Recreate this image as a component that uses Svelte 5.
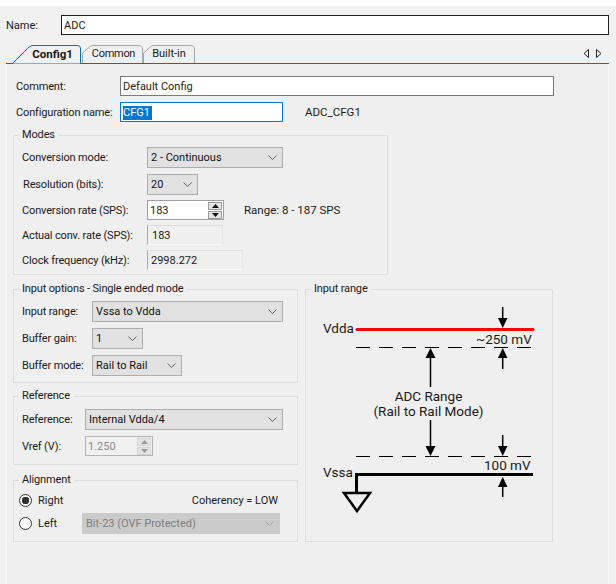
<script lang="ts">
  const dashes = [356, 379, 402, 425, 448, 471, 494, 517]
</script>

{#snippet combo(text, width, cls = '')}
  <div class="combo {cls}" style="width: {width}px">
    <span>{text}</span>
    <svg width="9" height="5" viewBox="0 0 9 5"><path d="M0.500 0.500l4 4 4-4" fill="none" stroke="currentColor" /></svg>
  </div>
{/snippet}

{#snippet spinButtons()}
  <div class="spin-btns">
    <div class="spin-btn"><svg width="7" height="4" viewBox="0 0 7 4"><path d="M3.5 0L7 4H0z" fill="currentColor" /></svg></div>
    <div class="spin-btn"><svg width="7" height="4" viewBox="0 0 7 4"><path d="M0 0h7L3.5 4z" fill="currentColor" /></svg></div>
  </div>
{/snippet}

<div class="window">
  <div class="name-row">
    <label class="name-label" for="name">Name:</label>
    <div class="name-input" id="name">ADC</div>
  </div>

  <div class="tab-strip">
    <div class="tab active">
      <svg class="tab-bg" width="69" height="19" viewBox="0 0 69 19">
        <path d="M0.5 18.5L15.5 3.5Q17.5 1.5 20 0.5H65Q68.500 0.5 68.500 3V19H0z" fill="#f0f0f0" stroke="#0e6db7" />
      </svg>
      <span>Config1</span>
    </div>
    <div class="tab common">
      <svg class="tab-bg" width="61" height="18" viewBox="0 0 61 18">
        <path d="M0.5 18V8L8 1.500Q9 0.500 11 0.500H57Q60.500 0.500 60.500 4V18" fill="#f0f0f0" stroke="#a8a8a8" />
      </svg>
      <span>Common</span>
    </div>
    <div class="tab builtin">
      <svg class="tab-bg" width="52" height="18" viewBox="0 0 52 18">
        <path d="M0.500 18V8L8 1.500Q9 0.500 11 0.500H48Q51.500 0.500 51.500 4V18" fill="#f0f0f0" stroke="#a8a8a8" />
      </svg>
      <span>Built-in</span>
    </div>
    <div class="tab-arrows">
      <svg width="19" height="9" viewBox="0 0 19 9">
        <path d="M5.500 0.500L1 4.500l4.500 4z" fill="none" stroke="#222" />
        <path d="M13.500 0.500L18 4.500l-4.500 4z" fill="none" stroke="#222" />
      </svg>
    </div>
  </div>

  <div class="page">
    <div class="row comment-row">
      <span class="lbl">Comment:</span>
      <div class="field comment">Default Config</div>
    </div>
    <div class="row config-row">
      <span class="lbl">Configuration name:</span>
      <div class="field config"><span class="selected">CFG1</span></div>
      <span class="macro">ADC_CFG1</span>
    </div>

    <fieldset class="modes">
      <legend>Modes</legend>
      <div class="stack modes-stack">
        <div class="row">
          <span class="lbl lbl-modes">Conversion mode:</span>
          {@render combo('2 - Continuous', 136)}
        </div>
        <div class="row resolution">
          <span class="lbl lbl-modes shift">Resolution (bits):</span>
          {@render combo('20', 51)}
        </div>
        <div class="row">
          <span class="lbl lbl-modes">Conversion rate (SPS):</span>
          <div class="spin rate">
            <span>183</span>
            {@render spinButtons()}
          </div>
          <span class="range-note">Range: 8 - 187 SPS</span>
        </div>
        <div class="row">
          <span class="lbl lbl-modes">Actual conv. rate (SPS):</span>
          <div class="readout actual">183</div>
        </div>
        <div class="row">
          <span class="lbl lbl-modes">Clock frequency (kHz):</span>
          <div class="readout clock">2998.272</div>
        </div>
      </div>
    </fieldset>

    <div class="lower">
      <div class="left-col">
        <fieldset class="input-options">
          <legend>Input options - Single ended mode</legend>
          <div class="stack opts-stack">
            <div class="row">
              <span class="lbl lbl-opts">Input range:</span>
              {@render combo('Vssa to Vdda', 191)}
            </div>
            <div class="row">
              <span class="lbl lbl-opts">Buffer gain:</span>
              {@render combo('1', 51)}
            </div>
            <div class="row">
              <span class="lbl lbl-opts">Buffer mode:</span>
              {@render combo('Rail to Rail', 90)}
            </div>
          </div>
        </fieldset>

        <fieldset class="reference">
          <legend>Reference</legend>
          <div class="stack ref-stack">
            <div class="row">
              <span class="lbl lbl-ref">Reference:</span>
              {@render combo('Internal Vdda/4', 198)}
            </div>
            <div class="row">
              <span class="lbl lbl-ref">Vref (V):</span>
              <div class="spin vref disabled">
                <span>1.250</span>
                {@render spinButtons()}
              </div>
            </div>
          </div>
        </fieldset>

        <fieldset class="alignment">
          <legend>Alignment</legend>
          <div class="row align-top">
            <span class="radio checked"></span>
            <span>Right</span>
            <span class="coherency">Coherency = LOW</span>
          </div>
          <div class="row align-bottom">
            <span class="radio"></span>
            <span class="left-lbl">Left</span>
            {@render combo('Bit-23 (OVF Protected)', 198, 'off')}
          </div>
        </fieldset>
      </div>

      <fieldset class="input-range">
        <legend>Input range</legend>
        <svg class="diagram" width="246" height="246" viewBox="306 296 246 246">
          <text x="323" y="333">Vdda</text>
          <line x1="357" y1="329.500" x2="533" y2="329.500" stroke="#f00" stroke-width="3" stroke-linecap="round" />
          {#each dashes as x}
            <line x1={x} x2={x + 14} y1="347.500" y2="347.500" stroke="#000" />
            <line x1={x} x2={x + 14} y1="456.500" y2="456.500" stroke="#000" />
          {/each}

          <path d="M502.700 307V320" stroke="#000" stroke-width="1.500" />
          <path d="M498 318h9.500l-4.750 10z" />
          <text x="476" y="343.500">~250 mV</text>
          <path d="M502.700 356V369" stroke="#000" stroke-width="1.500" />
          <path d="M498 358h9.500l-4.750-10z" />

          <path d="M430.500 356V387" stroke="#000" stroke-width="1.500" />
          <path d="M425.500 358h10l-5-10z" />
          <text x="428.500" y="401" text-anchor="middle">ADC Range</text>
          <text x="428.500" y="416" text-anchor="middle">(Rail to Rail Mode)</text>
          <path d="M430.500 420V447" stroke="#000" stroke-width="1.500" />
          <path d="M425.500 446h10l-5 10z" />

          <path d="M502.700 435V447" stroke="#000" stroke-width="1.500" />
          <path d="M498 446h9.500l-4.750 10z" />
          <text x="484" y="470">100 mV</text>

          <text x="323" y="477">Vssa</text>
          <path d="M356.500 493V474.500H533" fill="none" stroke="#000" stroke-width="3" />
          <path d="M344 493h26l-13 18z" fill="none" stroke="#000" stroke-width="2.500" />
          <path d="M502.700 485V497" stroke="#000" stroke-width="1.500" />
          <path d="M498 487h9.500l-4.750-10z" />
        </svg>
      </fieldset>
    </div>
  </div>
</div>

<style>
  :global(body) {
    background: #fff;
    font-family: Roboto, "Open Sans", sans-serif;
    font-size: 11px;
    color: #1a1a1a;
    white-space: nowrap;
  }

  .window {
    margin-top: 6px;
    height: 578px;
    background: #f1f1f1;
    overflow: hidden;
  }

  .name-row {
    display: flex;
    align-items: center;
    height: 20px;
    padding: 9px 7px 0 6px;
  }

  .name-label {
    width: 55px;
  }

  .name-input {
    flex: 1;
    height: 20px;
    box-sizing: border-box;
    padding: 0 2px;
    line-height: 19px;
    background: #fff;
    border: 1px solid #1f1f1f;
  }

  .tab-strip {
    display: flex;
    align-items: flex-end;
    height: 28px;
    margin: 0 7px 0 6px;
    border-bottom: 1px solid #0e6db7;
  }

  .tab {
    position: relative;
    height: 18px;
    line-height: 18px;
    text-align: center;
  }

  .tab span {
    position: relative;
  }

  .tab-bg {
    position: absolute;
    left: 0;
    top: 0;
  }

  .tab.active {
    width: 69px;
    margin-left: 6px;
    height: 19px;
    margin-bottom: -1px;
    font-size: 11.500px;
    font-weight: 700;
    padding-left: 12px;
    box-sizing: border-box;
  }

  .tab.common {
    width: 61px;
    margin-left: 1px;
    padding-left: 2px;
    box-sizing: border-box;
    letter-spacing: -0.3px;
  }

  .tab.builtin {
    width: 52px;
  }

  .tab-arrows {
    margin-left: auto;
    margin-right: 7px;
    margin-bottom: 5px;
    height: 9px;
    line-height: 0;
  }

  .page {
    margin: 0 7px 0 6px;
    padding: 12px 6px 0 6px;
    height: 520px;
    box-sizing: border-box;
    background: #efefef;
    border-left: 1px solid #f9f9f9;
    border-right: 1px solid #f9f9f9;
  }

  .row {
    display: flex;
    align-items: center;
  }

  .lbl {
    flex: none;
    letter-spacing: -0.15px;
  }

  .comment-row .lbl,
  .config-row .lbl {
    width: 104px;
    margin-left: 3px;
  }

  .field {
    box-sizing: border-box;
    height: 20px;
    padding: 0 2px;
    line-height: 19px;
    background: #fff;
  }

  .comment {
    width: 434px;
    border: 1px solid #7a7a7a;
  }

  .config-row {
    margin-top: 6px;
  }

  .config {
    width: 163px;
    border: 1px solid #0078d7;
  }

  .selected {
    background: #0078d7;
    color: #fff;
    display: inline-block;
    padding-right: 2px;
    line-height: 14px;
  }

  .macro {
    margin-left: 22px;
    font-size: 11.500px;
  }

  fieldset {
    margin: 0;
    padding: 0 0 0 8px;
    min-width: 0;
    box-sizing: border-box;
    border: 1px solid #dcdcdc;
  }

  legend {
    margin-left: -3px;
    padding: 0 3px;
    line-height: 14px;
    letter-spacing: -0.15px;
  }

  .modes {
    width: 375px;
    height: 147px;
    margin-top: 6px;
    padding-top: 5px;
  }

  .stack {
    display: flex;
    flex-direction: column;
  }

  .modes-stack {
    gap: 5px;
  }

  .resolution {
    margin-top: 1px;
  }

  .lbl-modes {
    width: 125px;
  }

  .shift {
    padding-left: 1px;
    box-sizing: border-box;
  }

  .combo {
    box-sizing: border-box;
    display: flex;
    align-items: center;
    justify-content: space-between;
    height: 21px;
    padding: 0 5px 0 3px;
    background: #e1e1e1;
    border: 1px solid #adadad;
    color: #111;
  }

  .combo svg {
    color: #606060;
  }

  .combo.off {
    background: #cbcbcb;
    border-color: #cbcbcb;
    color: #7c7c7c;
  }

  .combo.off svg {
    color: #a0a0a0;
  }

  .spin {
    box-sizing: border-box;
    display: flex;
    align-items: center;
    justify-content: space-between;
    height: 20px;
    padding: 0 1px 0 2px;
    background: #fff;
    border: 1px solid #a0a0a0;
  }

  .rate {
    width: 77px;
  }

  .vref {
    width: 68px;
  }

  .spin.disabled {
    background: #f0f0f0;
    border-color: #b4b4b4;
    color: #8a8a8a;
  }

  .spin-btns {
    display: flex;
    flex-direction: column;
    gap: 1px;
  }

  .spin-btn {
    box-sizing: border-box;
    width: 14px;
    height: 8px;
    display: flex;
    align-items: center;
    justify-content: center;
    background: #e4e4e4;
    border: 1px solid #9a9a9a;
    color: #111;
  }

  .disabled .spin-btn {
    border-color: #d4d4d4;
    color: #9a9a9a;
  }

  .range-note {
    margin-left: 20px;
    font-size: 11.500px;
  }

  .readout {
    box-sizing: border-box;
    height: 20px;
    line-height: 19px;
    padding-left: 4px;
    border-left: 1px solid #a8a8a8;
    border-top: 1px solid #dcdcdc;
    border-right: 1px solid #e6e6e6;
    border-bottom: 1px solid #fafafa;
  }

  .actual {
    width: 76px;
  }

  .clock {
    width: 96px;
    padding-left: 3px;
  }

  .lower {
    display: grid;
    grid-template-columns: 285px 248px;
    gap: 7px;
    margin-top: 7px;
  }

  .left-col {
    display: flex;
    flex-direction: column;
    gap: 6px;
  }

  .input-options {
    height: 101px;
    padding-top: 5px;
  }

  .opts-stack {
    gap: 6px;
  }

  .lbl-opts {
    width: 70px;
  }

  .reference {
    height: 76px;
    padding-top: 6px;
  }

  .ref-stack {
    gap: 6px;
  }

  .lbl-ref {
    width: 63px;
  }

  .alignment {
    height: 69px;
    margin-top: 2px;
    padding-top: 7px;
  }

  .align-top,
  .align-bottom {
    margin-left: -3px;
  }

  .radio {
    flex: none;
    box-sizing: border-box;
    width: 13px;
    height: 13px;
    margin-right: 6px;
    border-radius: 50%;
    border: 1px solid #333;
    background: #fff;
  }

  .radio.checked {
    background: radial-gradient(circle, #333 0 3.500px, #fff 4px);
  }

  .coherency {
    margin-left: auto;
    margin-right: 19px;
  }

  .align-bottom {
    margin-top: 6px;
  }

  .left-lbl {
    width: 44px;
  }

  .input-range {
    height: 260px;
  }

  .diagram {
    display: block;
    margin-left: -8px;
    font-size: 13.500px;
  }

  .diagram text {
    fill: #1a1a1a;
  }
</style>
